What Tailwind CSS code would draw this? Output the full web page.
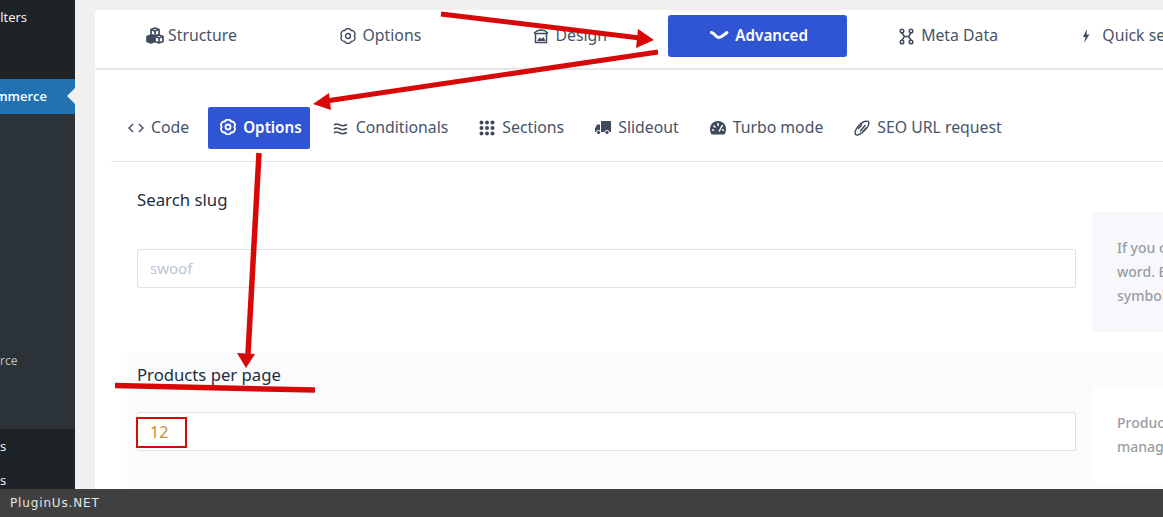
<!DOCTYPE html>
<html lang="en">
<head>
    <meta charset="UTF-8">
    <title>Search slug options</title>
    <script src="https://cdn.jsdelivr.net/npm/@tailwindcss/browser@4"></script>
</head>
<body class="relative h-[517px] w-[1163px] overflow-hidden bg-[#f0f0f1] font-['Noto_Sans',sans-serif]">
    <div class="flex h-[489px]">
        <!-- Admin sidebar -->
        <div class="w-[75px] shrink-0 flex flex-col bg-[#2c3338] font-['Open_Sans',sans-serif] text-[13px] text-white">
            <div class="h-[79px] bg-[#1d2327] text-right pt-[7px] pr-[48px] leading-5">lters</div>
            <div class="relative h-[35px] bg-[#2271b1] flex items-center justify-end pr-[28px] font-semibold">mmerce
                <span class="absolute right-0 top-[9px] border-y-[8px] border-r-[8px] border-y-transparent border-r-[#f0f0f1]"></span>
            </div>
            <div class="flex-1 text-right pt-[237px] pr-[60px] text-[12px] leading-5 text-[#c3c4c7]">rce</div>
            <div class="h-[60px] bg-[#1d2327] text-right pr-[69px] leading-[34px]">s<br>s</div>
        </div>

        <!-- Card -->
        <div class="ml-5 mt-[10px] flex-1 bg-white rounded-tl-[4px] overflow-hidden">
            <!-- Main tabs -->
            <div class="h-[60px] border-b-2 border-[#e8e8e8] flex gap-[10.4px] pt-[5px] pl-[4.5px] text-[15.8px] text-[#46546a] overflow-hidden">
                <div class="w-[179px] h-[42px] pl-1 shrink-0 flex items-center justify-center gap-[3px]">
                    <svg class="w-[20px] h-[18px]" viewBox="0 0 20 18" fill="#fff" stroke="#3f4a5c" stroke-width="1.700" stroke-linejoin="round"><path d="M10 1l4 1.500v5L10 9 6 7.500v-5z"/><path d="M6 2.500L10 4l4-1.500M10 4v4.500" fill="none"/><path d="M6 8l4 1.500v5L6 16l-4-1.500v-5z" fill="#3f4a5c"/><path d="M14 8l4 1.500v5L14 16l-4-1.500v-5z"/><path d="M10 9.500l4 1.500 4-1.500M14 11v4.500" fill="none"/></svg>
                    <span>Structure</span>
                </div>
                <div class="w-[179px] h-[42px] pl-1 shrink-0 flex items-center justify-center gap-[7px]">
                    <svg class="w-4 h-4" viewBox="1 1 14 14" fill="none" stroke="#3f4a5c" stroke-width="1.200"><path d="M10.750 3.240A3 3 0 0 1 13.500 8 3 3 0 0 1 10.750 12.760 3 3 0 0 1 5.250 12.760 3 3 0 0 1 2.500 8 3 3 0 0 1 5.250 3.240 3 3 0 0 1 10.750 3.240z"/><circle cx="8" cy="8" r="2.200"/></svg>
                    <span>Options</span>
                </div>
                <div class="w-[179px] h-[42px] pl-1 shrink-0 flex items-center justify-center gap-[7px]">
                    <svg class="w-4 h-4" viewBox="0 0 16 16" fill="none" stroke="#3f4a5c" stroke-width="1.500"><path d="M1 5.500C3 3 5 2 8 2s5 1 7 3.500"/><path d="M2.500 5.500h11v9h-11z"/><path d="M4 13l2.500-3.500 2 1.500 2-2 2 4z" fill="#3f4a5c" stroke="none"/></svg>
                    <span>Design</span>
                </div>
                <div class="w-[179px] h-[42px] pb-[2px] pl-1 shrink-0 flex items-center justify-center gap-[6px] rounded-[3px] bg-[#2f55d4] text-[15.2px] text-white font-semibold">
                    <svg class="w-[19px] h-3" viewBox="0 0 19 12" fill="none" stroke="#fff" stroke-width="3" stroke-linecap="round"><path d="M1.500 3.500c3 .5 4 4.500 7 5s5-2.500 8.500-5"/></svg>
                    <span>Advanced</span>
                </div>
                <div class="w-[179px] h-[42px] pl-1 shrink-0 flex items-center justify-center gap-[7px]">
                    <svg class="w-[15px] h-[17px]" viewBox="0 0 15 17" fill="none" stroke="#3f4a5c" stroke-width="1.500"><circle cx="3" cy="3" r="1.800"/><circle cx="12" cy="3" r="1.800"/><circle cx="3" cy="14" r="1.800"/><circle cx="12" cy="14" r="1.800"/><path d="M3 5l2.500 3.500L3 12M12 5L9.500 8.500 12 12M5.500 8.500h4"/></svg>
                    <span>Meta Data</span>
                </div>
                <div class="w-[179px] h-[42px] pl-2 shrink-0 flex items-center justify-center gap-3">
                    <svg class="w-2 h-[14px]" viewBox="0 0 8 14" fill="#3f4a5c"><path d="M5 0L1 8h2.500L2 14l5.500-8.500H4.500z"/></svg>
                    <span class="whitespace-nowrap">Quick search</span>
                </div>
            </div>

            <div class="ml-4">
                <!-- Sub tabs -->
                <div class="mt-[37px] pb-3 border-b border-[#e4e4e4] flex gap-[11px] pl-[5px] text-[15.8px] text-[#46546a]">
                    <div class="h-[42px] flex items-center gap-[7px] pl-3 pr-2">
                        <svg class="w-4 h-3" viewBox="0 0 16 12" fill="none" stroke="#3f4a5c" stroke-width="1.400"><path d="M5 2L1 6l4 4M11 2l4 4-4 4"/></svg>
                        <span>Code</span>
                    </div>
                    <div class="h-[42px] pb-[2px] flex items-center gap-[7px] pl-3 pr-2 rounded-[2px] bg-[#2f55d4] text-[15.2px] text-white font-semibold">
                        <svg class="w-4 h-4" viewBox="1 1 14 14" fill="none" stroke="#fff" stroke-width="1.600"><path d="M10.750 3.240A3 3 0 0 1 13.500 8 3 3 0 0 1 10.750 12.760 3 3 0 0 1 5.250 12.760 3 3 0 0 1 2.500 8 3 3 0 0 1 5.250 3.240 3 3 0 0 1 10.750 3.240z"/><circle cx="8" cy="8" r="2.200"/></svg>
                        <span>Options</span>
                    </div>
                    <div class="h-[42px] flex items-center gap-[7px] pl-3 pr-2">
                        <svg class="w-4 h-[13px]" viewBox="0 0 16 13" fill="none" stroke="#3f4a5c" stroke-width="1.500"><path d="M1 3c2-2 4-1 6 0s4 1 7-.5M1 7c2-2 4-1 6 0s4 1 7-.5M1 11c2-2 4-1 6 0s4 1 7-.5"/></svg>
                        <span>Conditionals</span>
                    </div>
                    <div class="h-[42px] flex items-center gap-[7px] pl-3 pr-2">
                        <svg class="w-4 h-4" viewBox="0 0 16 16" fill="#3f4a5c"><circle cx="2.500" cy="2.500" r="2"/><circle cx="8" cy="2.500" r="2"/><circle cx="13.500" cy="2.500" r="2"/><circle cx="2.500" cy="8" r="2"/><circle cx="8" cy="8" r="2"/><circle cx="13.500" cy="8" r="2"/><circle cx="2.500" cy="13.500" r="2"/><circle cx="8" cy="13.500" r="2"/><circle cx="13.500" cy="13.500" r="2"/></svg>
                        <span>Sections</span>
                    </div>
                    <div class="h-[42px] flex items-center gap-[7px] pl-3 pr-2">
                        <svg class="w-4 h-[14px]" viewBox="0 0 16 14" fill="#3f4a5c"><path d="M6 0h10v11H6zM5 3.500V11H0V7.500L2 3.500z"/><circle cx="3.500" cy="11.500" r="2.100" stroke="#fff"/><circle cx="12" cy="11.500" r="2.100" stroke="#fff"/></svg>
                        <span>Slideout</span>
                    </div>
                    <div class="h-[42px] flex items-center gap-[7px] pl-3 pr-2">
                        <svg class="w-4 h-[14px]" viewBox="0 0 16 14" fill="#3f4a5c"><path d="M8 0a8 8 0 0 1 8 8c0 2-.6 4-1.600 5.500H1.600C.6 12 0 10 0 8a8 8 0 0 1 8-8z"/><path d="M8 2v3M3.500 4.500l2 2M12.500 4l-3.500 6.500M2 9h2M12 9h2" stroke="#fff" stroke-width="1.500"/></svg>
                        <span>Turbo mode</span>
                    </div>
                    <div class="h-[42px] flex items-center gap-[7px] pl-3 pr-2">
                        <svg class="w-4 h-4" viewBox="0 0 16 16" fill="none" stroke="#3f4a5c" stroke-width="1.400"><path d="M1.500 14.500c-1-2 0-5 3-8.500S11 .5 14.500 1.500c1 2.500 0 5-3.500 8.500s-7.500 6-9.500 4.500z"/><path d="M6 11.500l5.500-6.500M4 9l4-4.500M8.500 12L12.500 7.500"/></svg>
                        <span>SEO URL request</span>
                    </div>
                </div>

                <!-- Search slug row -->
                <div class="mt-4 ml-4 h-[175px] pl-[10px] pt-[10px]">
                    <div class="text-[16.8px] leading-6 text-[#1f2d3d]">Search slug</div>
                    <div class="flex items-center gap-4">
                        <div class="w-[939px] h-[39px] mb-[7px] shrink-0 border border-[#dfe1e6] rounded-[2px] bg-white flex items-center pl-3 text-[15px] text-[#b8c6d4]">swoof</div>
                        <div class="w-[200px] h-[120px] shrink-0 rounded-[3px] bg-[#f7f8fb] pl-[25px] flex flex-col justify-center text-sm font-medium leading-6 text-[#9a9ca5] whitespace-nowrap">
                            <span>If you c</span>
                            <span>word. E</span>
                            <span>symbol</span>
                        </div>
                    </div>
                </div>

                <!-- Products per page row -->
                <div class="ml-4 h-[140px] pl-[10px] pt-[10px] bg-[#fafbfd]">
                    <div class="text-[16.7px] leading-6 text-[#1f2d3d]">Products per page</div>
                    <div class="flex items-center gap-4">
                        <div class="w-[939px] h-[39px] mb-[7px] shrink-0 border border-[#dfe1e6] rounded-[2px] bg-white flex items-center pl-3 text-base text-[#c8902a]">12</div>
                        <div class="w-[200px] h-[96px] shrink-0 rounded-[3px] bg-white pl-[25px] flex flex-col justify-center text-sm font-medium leading-6 text-[#9a9ca5] whitespace-nowrap">
                            <span>Produc</span>
                            <span>manag</span>
                        </div>
                    </div>
                </div>
            </div>
        </div>
    </div>

    <!-- Bottom bar -->
    <div class="h-[28px] bg-[#404040] flex items-center pl-[10px] font-['DejaVu_Sans',sans-serif] text-xs tracking-[0.85px] text-[#e4e4e4]">PluginUs.NET</div>

    <!-- Red annotations drawn over the screenshot -->
    <div class="absolute left-[136px] top-[417px] w-[51px] h-[31px] border-2 border-[#d40b0b]"></div>
    <svg class="absolute left-0 top-0" width="1163" height="517" viewBox="0 0 1163 517" fill="none">
        <path d="M441 14L640 38" stroke="#d90808" stroke-width="5"/>
        <path d="M654 40L638 29 636 48z" fill="#d90808"/>
        <path d="M658 52L326 101" stroke="#d90808" stroke-width="5"/>
        <path d="M313 104L329 93 331 110z" fill="#d90808"/>
        <path d="M259 153L248 354" stroke="#d90808" stroke-width="5.500"/>
        <path d="M246 368L237 353 255 354z" fill="#d90808"/>
        <path d="M115 385.500L315 390" stroke="#d90808" stroke-width="5.500"/>
    </svg>
</body>
</html>
